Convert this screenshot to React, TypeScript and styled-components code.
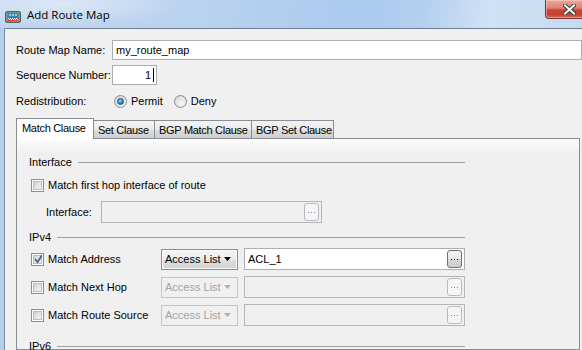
import React from 'react';
import styled, { createGlobalStyle, css } from 'styled-components';

const Global = createGlobalStyle`
  html, body { margin: 0; padding: 0; background: #f0f0f0; overflow: hidden; }
  #root { width: 582px; height: 350px; }
`;

const UI_FONT = `"Liberation Sans", Arial, sans-serif`;

const Window = styled.div`
  width: 582px;
  height: 350px;
  display: flex;
  flex-direction: column;
  overflow: hidden;
  background: #b3cdea;
  font-family: ${UI_FONT};
  font-size: 11px;
  color: #000;
`;

const TitleBar = styled.div`
  height: 28px;
  flex: none;
  display: flex;
  align-items: flex-start;
  overflow: hidden;
  background:
    radial-gradient(ellipse 180px 30px at 60px 4px, rgba(255,255,255,0.45), rgba(255,255,255,0) 70%),
    linear-gradient(100deg, #c2d7ef 0%, #b9d2ee 35%, #abcaee 62%, #b3cfef 72%, #d0e1f4 84%, #c4daf3 100%);
`;

const TitleIcon = styled.svg`
  flex: none;
  margin: 11px 0 0 5px;
`;

const TitleText = styled.span`
  margin: 6px 0 0 6px;
  font-family: "Open Sans", "Noto Sans", sans-serif;
  font-size: 11.5px;
  line-height: 18px;
  color: #000;
`;

const CloseButton = styled.div`
  flex: none;
  margin-left: auto;
  margin-right: -11px;
  width: 46px;
  height: 18px;
  display: flex;
  align-items: center;
  justify-content: center;
  border: 1px solid #6e3a32;
  border-top: none;
  border-radius: 0 0 0 4px;
  background: linear-gradient(#e9a89a 0%, #dc8272 45%, #c9473a 55%, #c7402f 80%, #d3665a 100%);
  box-shadow: inset 0 0 0 1px rgba(255, 220, 210, 0.45);
`;

const Body = styled.div`
  flex: 1;
  margin-left: 4px;
  border-left: 1px solid #7f8fa2;
  border-top: 1px solid #6e7f92;
  background: #f0f0f0;
  padding: 11px 0 0 11px;
  display: flex;
  flex-direction: column;
  min-height: 0;
`;

const TopForm = styled.div`
  display: grid;
  grid-template-columns: 96px auto;
  grid-template-rows: 20px 20px 22px;
  row-gap: 5px;
  align-items: center;
`;

const Label = styled.span<{ $disabled?: boolean }>`
  white-space: nowrap;
  color: ${(p) => (p.$disabled ? '#a0a0a0' : '#000')};
`;

const TextInput = styled.div<{ $width: number; $align?: 'left' | 'right' }>`
  box-sizing: border-box;
  width: ${(p) => p.$width}px;
  height: 20px;
  background: #fff;
  border: 1px solid #a9aeb5;
  display: flex;
  align-items: center;
  justify-content: ${(p) => (p.$align === 'right' ? 'flex-end' : 'flex-start')};
  padding: 0 2px 0 3px;
  white-space: nowrap;
`;

const Caret = styled.span`
  display: inline-block;
  width: 1px;
  height: 14px;
  margin-left: 2px;
  background: #000;
`;

const RadioGroup = styled.div`
  display: flex;
  align-items: center;
  padding-left: 2px;
  gap: 11px;
`;

const RadioOption = styled.label`
  display: flex;
  align-items: center;
  gap: 4px;
`;

const RadioCircle = styled.span<{ $checked?: boolean }>`
  box-sizing: border-box;
  width: 13px;
  height: 13px;
  border-radius: 50%;
  border: 1px solid #8a8f95;
  background: radial-gradient(circle at 60% 65%, #f8f8f8 0%, #dcdcdc 70%, #c9c9c9 100%);
  display: flex;
  align-items: center;
  justify-content: center;
  ${(p) =>
    p.$checked &&
    css`
      &::after {
        content: '';
        width: 7px;
        height: 7px;
        border-radius: 50%;
        box-sizing: border-box;
        border: 1px solid #1c4f7d;
        background: radial-gradient(circle at 40% 35%, #a8dcf6 0%, #3a94cf 45%, #145c95 100%);
      }
    `}
`;

const Tabs = styled.div`
  margin-top: 6px;
  display: flex;
  flex-direction: column;
  width: 564px;
  flex: 1;
  min-height: 0;
`;

const TabStrip = styled.div`
  display: flex;
  align-items: flex-end;
  height: 20px;
  position: relative;
  z-index: 1;
`;

const Tab = styled.div<{ $active?: boolean; $w: number }>`
  box-sizing: border-box;
  width: ${(p) => p.$w}px;
  border: 1px solid #898c95;
  border-bottom: none;
  display: flex;
  align-items: center;
  white-space: nowrap;
  letter-spacing: -0.3px;
  ${(p) =>
    p.$active
      ? css`
          height: 21px;
          margin-bottom: -1px;
          padding: 0 0 2px 5px;
          background: #fff;
        `
      : css`
          height: 18px;
          margin-left: -1px;
          padding: 0 0 0 4px;
          background: linear-gradient(#f3f3f3 0%, #ebebeb 50%, #dcdcdc 51%, #cfcfcf 100%);
        `}
`;

const TabPanel = styled.div`
  flex: 1;
  border: 1px solid #898c95;
  background: linear-gradient(#fcfcfc 0px, #f0f0f0 14px);
  padding: 16px 0 0 12px;
  display: flex;
  flex-direction: column;
  min-height: 0;
`;

const Group = styled.div`
  width: 436px;
  display: flex;
  flex-direction: column;
`;

const GroupHeader = styled.div<{ $gap: number }>`
  display: flex;
  align-items: center;
  gap: 6px;
  height: 14px;
  flex: none;
  margin-top: ${(p) => p.$gap}px;
  &::after {
    content: '';
    flex: 1;
    border-top: 1px solid #a0a0a0;
    margin-top: 1px;
  }
`;

const CheckRow = styled.label<{ $gap?: number }>`
  display: flex;
  align-items: center;
  gap: 4px;
  padding-left: 2px;
  height: 14px;
  margin-top: ${(p) => p.$gap ?? 0}px;
`;

const CheckBox = styled.span`
  box-sizing: border-box;
  flex: none;
  width: 13px;
  height: 13px;
  border: 1px solid #8a8f95;
  background: #fdfdfd;
  padding: 1px;
  display: flex;
  position: relative;
  &::before {
    content: '';
    flex: 1;
    background: linear-gradient(135deg, #cbcfd5 0%, #e4e6e9 55%, #f4f4f4 100%);
    border: 1px solid #b9bec4;
  }
`;

const CheckMark = styled.svg`
  position: absolute;
  left: 1px;
  top: 0px;
`;

const FieldRow = styled.div`
  display: flex;
  align-items: center;
  margin-top: 9px;
  padding-left: 17px;
  height: 22px;
`;

const FieldLabel = styled.span`
  width: 55px;
  white-space: nowrap;
`;

const BrowseField = styled.div<{ $disabled?: boolean; $width?: number }>`
  box-sizing: border-box;
  height: 22px;
  width: ${(p) => (p.$width ? `${p.$width}px` : 'auto')};
  border: 1px solid ${(p) => (p.$disabled ? '#b4b6b9' : '#a9aeb5')};
  background: ${(p) => (p.$disabled ? '#f0f0f0' : '#fff')};
  display: flex;
  align-items: center;
  padding: 0 2px 0 3px;
  white-space: nowrap;
`;

const Ellipsis = styled.span<{ $disabled?: boolean }>`
  box-sizing: border-box;
  margin-left: auto;
  width: 15px;
  height: 18px;
  border-radius: 3px;
  display: flex;
  align-items: center;
  justify-content: center;
  ${(p) =>
    p.$disabled
      ? css`
          border: 1px solid #b7bbbf;
          background: #f5f5f5;
        `
      : css`
          border: 1px solid #707070;
          background: linear-gradient(#f4f4f4 0%, #e8e8e8 50%, #d6d6d6 51%, #cdcdcd 100%);
        `}
`;

const MatchGrid = styled.div`
  display: grid;
  grid-template-columns: 126px 77px 221px;
  column-gap: 6px;
  grid-auto-rows: 22px;
  row-gap: 6px;
  align-items: center;
  margin-top: 4px;
`;

const Combo = styled.div<{ $disabled?: boolean }>`
  box-sizing: border-box;
  height: 21px;
  display: flex;
  align-items: center;
  padding: 0 6px 0 3px;
  white-space: nowrap;
  ${(p) =>
    p.$disabled
      ? css`
          border: 1px solid #c3c5c8;
          background: #f0f0f0;
          color: #a3a3a3;
        `
      : css`
          border: 1px solid #8c8c8c;
          box-shadow: inset 0 0 0 1px #fafafa;
          background: linear-gradient(#f5f5f5 0%, #ececec 50%, #dedede 51%, #d3d3d3 100%);
          color: #000;
        `}
`;

const ComboArrow = styled.svg`
  margin-left: auto;
`;

const Dots = ({ color }: { color: string }) => (
  <svg width="7" height="2" viewBox="0 0 7 2" style={{ marginTop: 1 }}>
    <rect x="0" y="0" width="1" height="1" fill={color} />
    <rect x="3" y="0" width="1" height="1" fill={color} />
    <rect x="6" y="0" width="1" height="1" fill={color} />
  </svg>
);

const Check = () => (
  <CheckMark width="11" height="11" viewBox="0 0 11 11">
    <path d="M2.5 5.5 L4.5 8.3 L8.5 2" fill="none" stroke="#4d6190" strokeWidth="1.7" strokeLinecap="round" strokeLinejoin="round" />
  </CheckMark>
);

const CheckItem = ({ label, checked }: { label: string; checked?: boolean }) => (
  <CheckRow>
    <CheckBox>{checked && <Check />}</CheckBox>
    <Label>{label}</Label>
  </CheckRow>
);

const tabs = [
  { label: 'Match Clause', w: 78 },
  { label: 'Set Clause', w: 62 },
  { label: 'BGP Match Clause', w: 98 },
  { label: 'BGP Set Clause', w: 83 },
];

const matchRows = [
  { label: 'Match Address', checked: true, value: 'ACL_1' },
  { label: 'Match Next Hop', checked: false, value: '' },
  { label: 'Match Route Source', checked: false, value: '' },
];

export default function App() {
  return (
    <>
      <Global />
      <Window>
        <TitleBar>
          <TitleIcon width="16" height="12" viewBox="0 0 16 12">
            <rect x="0.5" y="0.5" width="15" height="11" rx="1.5" fill="#7f9a84" stroke="#4c6652" />
            <rect x="2.5" y="2" width="11" height="4" fill="#2f86d8" />
            <rect x="4" y="3.5" width="2" height="1" fill="#fff" />
            <rect x="7" y="3.5" width="2" height="1" fill="#fff" />
            <rect x="10" y="3.5" width="2" height="1" fill="#fff" />
            <rect x="2.5" y="6" width="11" height="4" fill="#e23a3a" />
            <rect x="3" y="7" width="1" height="1" fill="#fff" />
            <rect x="5" y="7" width="1" height="1" fill="#fff" />
            <rect x="7" y="7" width="1" height="1" fill="#fff" />
            <rect x="9" y="7" width="1" height="1" fill="#fff" />
            <rect x="11" y="7" width="1" height="1" fill="#fff" />
            <rect x="4" y="8" width="1" height="1" fill="#fff" />
            <rect x="6" y="8" width="1" height="1" fill="#fff" />
            <rect x="8" y="8" width="1" height="1" fill="#fff" />
            <rect x="10" y="8" width="1" height="1" fill="#fff" />
            <rect x="12" y="8" width="1" height="1" fill="#fff" />
          </TitleIcon>
          <TitleText>Add Route Map</TitleText>
          <CloseButton>
            <svg width="13" height="11" viewBox="0 0 13 11">
              <path d="M2 1.5 L11 9.5 M11 1.5 L2 9.5" stroke="#3c3c3c" strokeWidth="4" strokeLinecap="square" />
              <path d="M2 1.5 L11 9.5 M11 1.5 L2 9.5" stroke="#ffffff" strokeWidth="2" strokeLinecap="square" />
            </svg>
          </CloseButton>
        </TitleBar>
        <Body>
          <TopForm>
            <Label>Route Map Name:</Label>
            <TextInput $width={470}>my_route_map</TextInput>
            <Label>Sequence Number:</Label>
            <TextInput $width={45} $align="right">
              1<Caret />
            </TextInput>
            <Label>Redistribution:</Label>
            <RadioGroup>
              <RadioOption>
                <RadioCircle $checked />
                <span>Permit</span>
              </RadioOption>
              <RadioOption>
                <RadioCircle />
                <span>Deny</span>
              </RadioOption>
            </RadioGroup>
          </TopForm>
          <Tabs>
            <TabStrip>
              {tabs.map((t, i) => (
                <Tab key={t.label} $active={i === 0} $w={t.w}>
                  {t.label}
                </Tab>
              ))}
            </TabStrip>
            <TabPanel>
              <Group>
                <GroupHeader $gap={0}>Interface</GroupHeader>
                <CheckRow $gap={9}>
                  <CheckBox />
                  <Label>Match first hop interface of route</Label>
                </CheckRow>
                <FieldRow>
                  <FieldLabel>Interface:</FieldLabel>
                  <BrowseField $disabled $width={221}>
                    <Ellipsis $disabled>
                      <Dots color="#8a8a8a" />
                    </Ellipsis>
                  </BrowseField>
                </FieldRow>
                <GroupHeader $gap={7}>IPv4</GroupHeader>
                <MatchGrid>
                  {matchRows.map((r) => (
                    <React.Fragment key={r.label}>
                      <CheckItem label={r.label} checked={r.checked} />
                      <Combo $disabled={!r.checked}>
                        Access List
                        <ComboArrow width="7" height="4" viewBox="0 0 7 4">
                          <path d="M0 0 H7 L3.5 4 Z" fill={r.checked ? '#000' : '#b0b0b0'} />
                        </ComboArrow>
                      </Combo>
                      <BrowseField $disabled={!r.checked}>
                        {r.value}
                        <Ellipsis $disabled={!r.checked}>
                          <Dots color={r.checked ? '#000' : '#8a8a8a'} />
                        </Ellipsis>
                      </BrowseField>
                    </React.Fragment>
                  ))}
                </MatchGrid>
                <GroupHeader $gap={13}>IPv6</GroupHeader>
              </Group>
            </TabPanel>
          </Tabs>
        </Body>
      </Window>
    </>
  );
}
